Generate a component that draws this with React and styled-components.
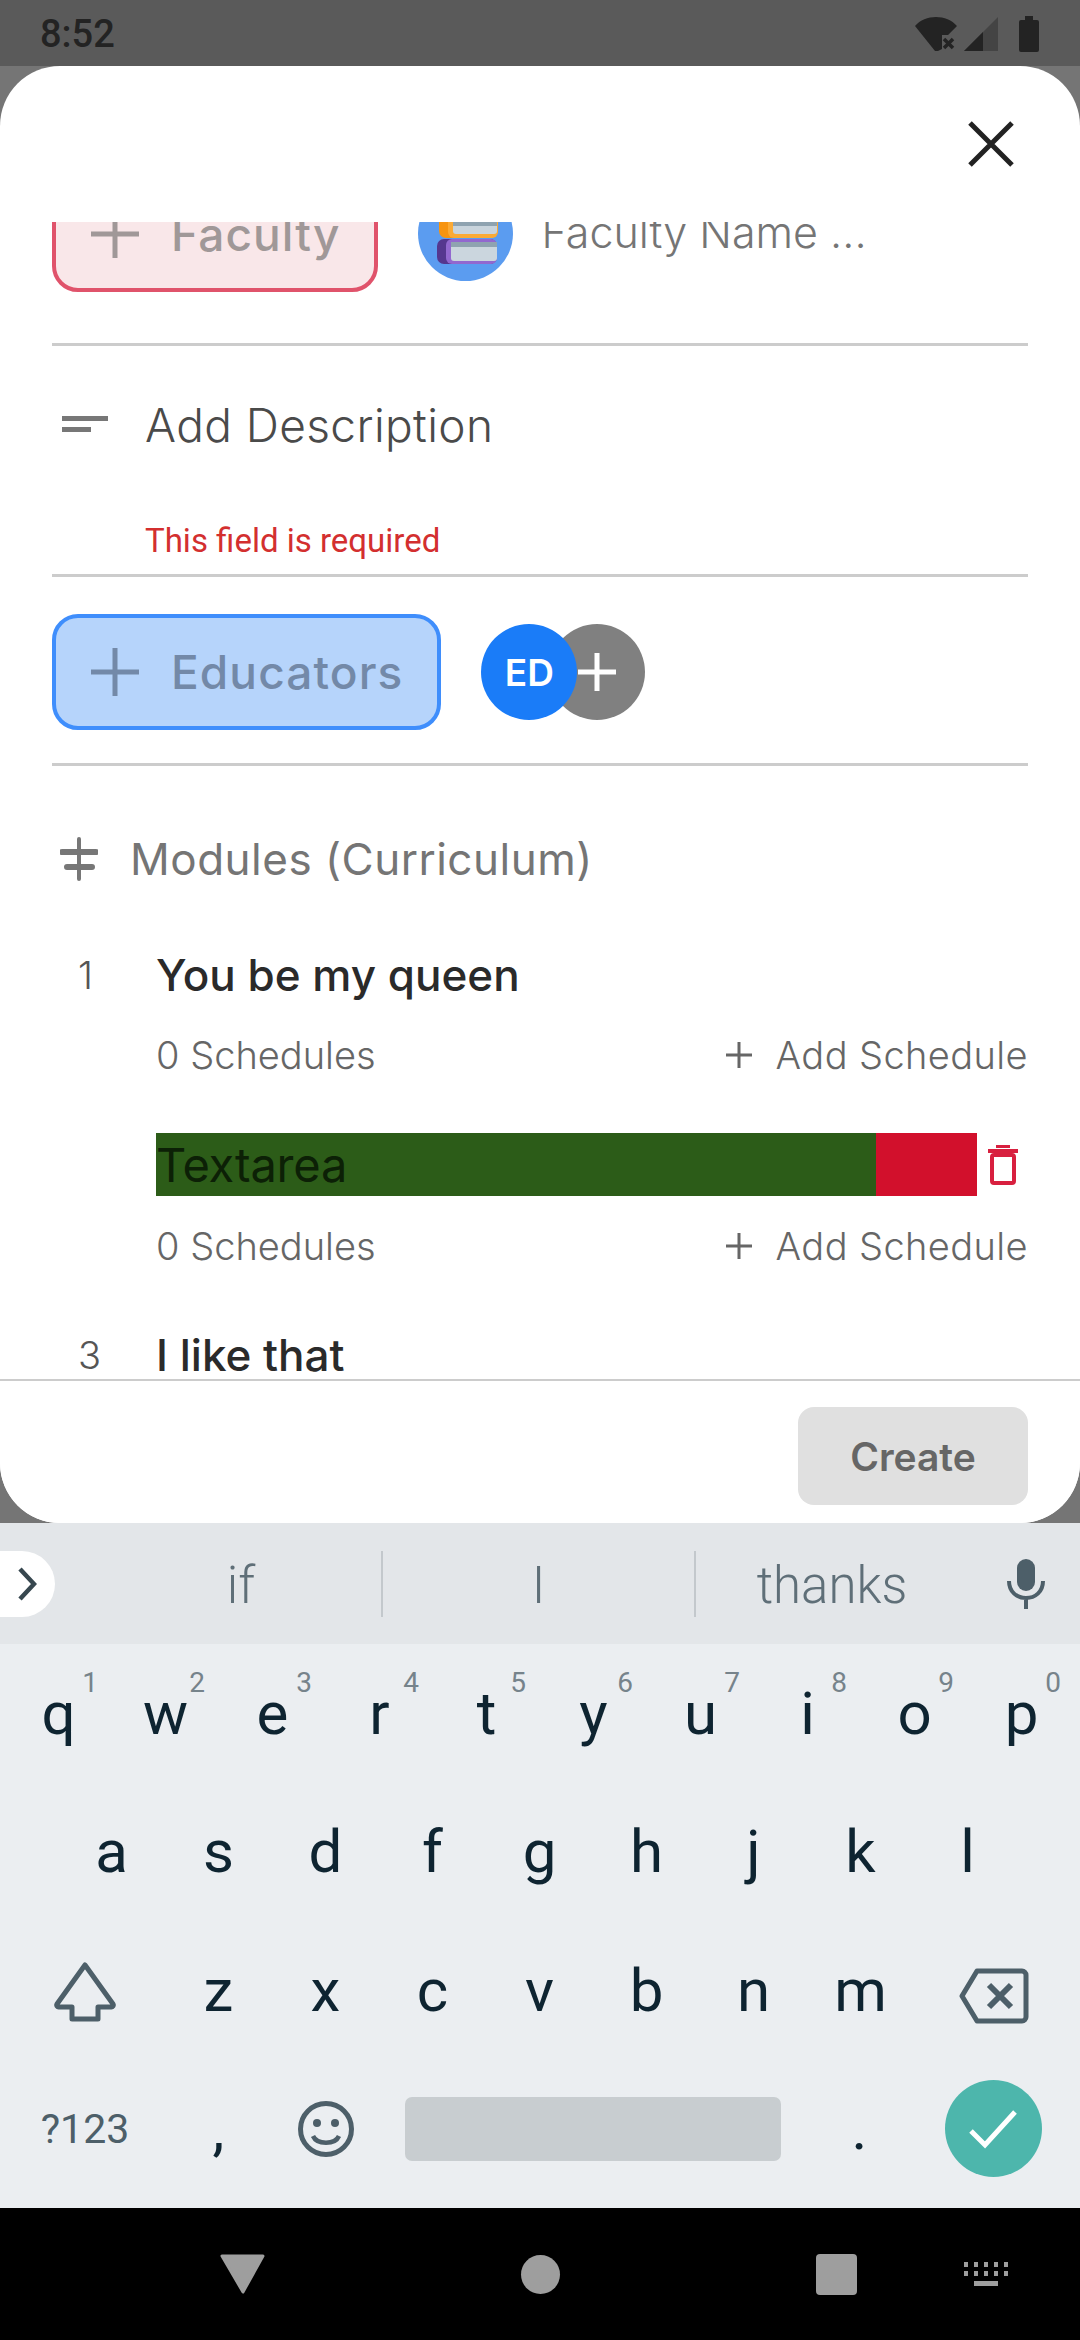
import styled, { createGlobalStyle } from 'styled-components'

const Global = createGlobalStyle`
  html, body { margin: 0; padding: 0; background: #757575; }
  * { box-sizing: border-box; }
`

const rows = ['qwertyuiop', 'asdfghjkl']
const hints = '1234567890'

function Plus({ size = 48, stroke = 5, color = 'currentColor' }) {
  return (
    <svg width={size} height={size} viewBox="0 0 48 48">
      <path d="M24 0V48M0 24H48" stroke={color} strokeWidth={(stroke * 48) / size} fill="none" />
    </svg>
  )
}

function Books() {
  return (
    <svg width="95" height="95" viewBox="0 0 95 95">
      <circle cx="47.5" cy="47.5" r="47.5" fill="#5b9cf0" />
      <rect x="21" y="30" width="58" height="22" rx="7" fill="#f79410" />
      <rect x="30" y="30" width="50" height="22" rx="6" fill="#fbaa35" />
      <rect x="35" y="35" width="44" height="13" rx="3" fill="#c9d4dc" />
      <rect x="35" y="35" width="44" height="5" fill="#8fa3b0" />
      <rect x="19" y="53" width="60" height="25" rx="7" fill="#55378f" />
      <rect x="28" y="53" width="51" height="25" rx="6" fill="#9268cf" />
      <rect x="33" y="56" width="46" height="19" rx="3" fill="#cbd6de" />
      <rect x="33" y="56" width="46" height="5" fill="#8fa3b0" />
    </svg>
  )
}

function Schedules() {
  return (
    <MetaRow>
      <span>0 Schedules</span>
      <AddSchedule>
        <Plus size={26} stroke={3} />
        <span>Add Schedule</span>
      </AddSchedule>
    </MetaRow>
  )
}

export default function App() {
  return (
    <Screen>
      <Global />
      <StatusBar>
        <Clock>8:52</Clock>
        <StatusIcons>
          <svg width="42" height="34" viewBox="0 0 42 34">
            <path d="M0 9C5 3 13 0 21 0s16 3 21 9L33 18H27V32L23 34H20Z" fill="#232323" />
            <path d="M29 22l9 9M38 22l-9 9" stroke="#232323" strokeWidth="3.5" />
          </svg>
          <svg width="34" height="34" viewBox="0 0 34 34">
            <path d="M34 0V34H0Z" fill="#444" />
            <path d="M19 15V34H0Z" fill="#232323" />
          </svg>
          <svg width="20" height="36" viewBox="0 0 20 36">
            <path d="M6 0H14V4H18a2 2 0 0 1 2 2V34a2 2 0 0 1-2 2H2a2 2 0 0 1-2-2V6a2 2 0 0 1 2-2H6Z" fill="#232323" />
          </svg>
        </StatusIcons>
      </StatusBar>

      <Sheet>
        <SheetHeader>
          <svg width="46" height="46" viewBox="0 0 46 46">
            <path d="M2 2L44 44M44 2L2 44" stroke="#222" strokeWidth="5" fill="none" />
          </svg>
        </SheetHeader>

        <Scroller>
          <ScrollBody>
            <FacultyRow>
              <PickButton $tone="red">
                <Plus size={48} stroke={5} />
                <span>Faculty</span>
              </PickButton>
              <BookBadge>
                <Books />
              </BookBadge>
              <FacultyName>Faculty Name ...</FacultyName>
            </FacultyRow>

            <DescriptionBlock>
              <DescriptionRow>
                <svg width="46" height="18" viewBox="0 0 46 18">
                  <rect x="0" y="0" width="46" height="5" fill="#777" />
                  <rect x="0" y="11" width="29" height="5" fill="#777" />
                </svg>
                <DescriptionText>Add Description</DescriptionText>
              </DescriptionRow>
              <ErrorText>This field is required</ErrorText>
            </DescriptionBlock>

            <EducatorRow>
              <PickButton $tone="blue">
                <Plus size={48} stroke={5} />
                <span>Educators</span>
              </PickButton>
              <AvatarStack>
                <MoreAvatar>
                  <Plus size={38} stroke={5} color="#fff" />
                </MoreAvatar>
                <Avatar>ED</Avatar>
              </AvatarStack>
            </EducatorRow>

            <ModulesHead>
              <svg width="38" height="44" viewBox="0 0 38 44">
                <path d="M2 15H36M7 30H32" stroke="#777" strokeWidth="6" strokeLinecap="round" />
                <path d="M19 2V12M19 18V27M19 33V42" stroke="#777" strokeWidth="4" strokeLinecap="round" />
              </svg>
              <span>Modules (Curriculum)</span>
            </ModulesHead>

            <Module $gap={56}>
              <ModuleNo>1</ModuleNo>
              <ModuleBody>
                <ModuleTitle>You be my queen</ModuleTitle>
                <Schedules />
              </ModuleBody>
            </Module>

            <Module $gap={48}>
              <ModuleNo />
              <ModuleBody>
                <EditRow>
                  <GreenField>Textarea</GreenField>
                  <RedField />
                  <TrashBtn>
                    <svg width="30" height="40" viewBox="0 0 30 40">
                      <path d="M0 6H30M10 3V1H20V3" stroke="#d8203f" strokeWidth="4" fill="none" />
                      <rect x="4" y="10" width="22" height="28" rx="2" stroke="#d8203f" strokeWidth="4" fill="none" />
                    </svg>
                  </TrashBtn>
                </EditRow>
                <Schedules />
              </ModuleBody>
            </Module>

            <Module $gap={49}>
              <ModuleNo>3</ModuleNo>
              <ModuleBody>
                <ModuleTitle>I like that</ModuleTitle>
              </ModuleBody>
            </Module>
          </ScrollBody>
        </Scroller>

        <SheetFooter>
          <CreateBtn>Create</CreateBtn>
        </SheetFooter>
      </Sheet>

      <Keyboard>
        <Suggestions>
          <ExpandPill>
            <svg width="20" height="34" viewBox="0 0 20 34">
              <path d="M3 2L17 17L3 32" stroke="#37474f" strokeWidth="4.5" fill="none" />
            </svg>
          </ExpandPill>
          <Suggestion $width={326} $pad={46}>if</Suggestion>
          <Suggestion $width={313} $line>I</Suggestion>
          <Suggestion $width={274} $line>thanks</Suggestion>
          <MicSlot>
            <svg width="38" height="50" viewBox="0 0 38 50">
              <rect x="10" y="0" width="18" height="32" rx="9" fill="#4d5f69" />
              <path d="M2 22C2 33 10 39 19 39s17-6 17-17M19 39V50" stroke="#4d5f69" strokeWidth="4" fill="none" />
            </svg>
          </MicSlot>
        </Suggestions>

        <Keys>
          <KeyRow $inset={5}>
            {rows[0].split('').map((k, i) => (
              <Key key={k}>
                {k}
                <Hint>{hints[i]}</Hint>
              </Key>
            ))}
          </KeyRow>
          <KeyRow $inset={58}>
            {rows[1].split('').map((k) => (
              <Key key={k}>{k}</Key>
            ))}
          </KeyRow>
          <KeyRow $inset={5}>
            <WideKey $lift={4}>
              <svg width="62" height="60" viewBox="0 0 62 60">
                <path d="M31 3L59 42a2 2 0 0 1-2 3H44V57H18V45H5a2 2 0 0 1-2-3Z" stroke="#4d5f69" strokeWidth="5" fill="none" strokeLinejoin="round" />
              </svg>
            </WideKey>
            {'zxcvbnm'.split('').map((k) => (
              <Key key={k}>{k}</Key>
            ))}
            <WideKey $lift={12}>
              <svg width="70" height="56" viewBox="0 0 70 56">
                <path d="M18 3H63a4 4 0 0 1 4 4V49a4 4 0 0 1-4 4H18L3 28Z" stroke="#4d5f69" strokeWidth="5" fill="none" strokeLinejoin="round" />
                <path d="M30 17L52 39M52 17L30 39" stroke="#4d5f69" strokeWidth="6" />
              </svg>
            </WideKey>
          </KeyRow>
          <KeyRow $inset={5}>
            <WideKey>
              <SymbolsLabel>?123</SymbolsLabel>
            </WideKey>
            <Key>,</Key>
            <Key>
              <svg width="56" height="56" viewBox="0 0 56 56">
                <circle cx="28" cy="28" r="25.5" stroke="#4d5f69" strokeWidth="5" fill="none" />
                <circle cx="19" cy="22" r="4" fill="#4d5f69" />
                <circle cx="37" cy="22" r="4" fill="#4d5f69" />
                <path d="M15 35C19 44 37 44 41 35" stroke="#4d5f69" strokeWidth="4.5" fill="none" />
              </svg>
            </Key>
            <SpaceKey>
              <SpaceBar />
            </SpaceKey>
            <Key>.</Key>
            <WideKey>
              <DoneCircle>
                <svg width="50" height="40" viewBox="0 0 50 40">
                  <path d="M3 22L17 36L47 3" stroke="#fff" strokeWidth="5" fill="none" />
                </svg>
              </DoneCircle>
            </WideKey>
          </KeyRow>
        </Keys>
      </Keyboard>

      <NavBar>
        <svg width="45" height="40" viewBox="0 0 45 40">
          <path d="M2 2H43L23 38Z" fill="#9e9e9e" stroke="#9e9e9e" strokeWidth="3" strokeLinejoin="round" />
        </svg>
        <NavDot />
        <NavSquare />
        <svg width="44" height="24" viewBox="0 0 44 24">
          <path d="M2 0v5M12 0v5M22 0v5M32 0v5M42 0v5M2 9v5M12 9v5M22 9v5M32 9v5M42 9v5" stroke="#9e9e9e" strokeWidth="4" />
          <rect x="10" y="19" width="24" height="5" fill="#9e9e9e" />
        </svg>
      </NavBar>
    </Screen>
  )
}

const Screen = styled.div`
  width: 1080px;
  height: 2340px;
  background: #757575;
  display: flex;
  flex-direction: column;
  overflow: hidden;
  font-family: Inter, 'Liberation Sans', sans-serif;
`

const StatusBar = styled.div`
  height: 66px;
  background: #5a5a5a;
  display: flex;
  align-items: center;
  justify-content: space-between;
  padding: 1px 41px 0 40px;
`

const Clock = styled.span`
  font: 500 38px Roboto, sans-serif;
  color: #232323;
`

const StatusIcons = styled.div`
  display: flex;
  align-items: center;
  gap: 7px;

  svg:last-child {
    margin-left: 14px;
  }
`

const Sheet = styled.div`
  height: 1457px;
  background: #fff;
  border-radius: 60px;
  display: flex;
  flex-direction: column;
  overflow: hidden;
`

const SheetHeader = styled.div`
  height: 156px;
  flex: none;
  display: flex;
  align-items: center;
  justify-content: flex-end;
  padding-right: 66px;
`

const Scroller = styled.div`
  flex: 1;
  min-height: 0;
  overflow: hidden;
`

const ScrollBody = styled.div`
  margin-top: -46px;
  padding: 0 52px;
`

const FacultyRow = styled.div`
  height: 170px;
  display: flex;
  align-items: flex-start;
  border-bottom: 3px solid #ccc;
`

const PickButton = styled.div`
  height: 116px;
  display: flex;
  align-items: center;
  gap: 32px;
  padding: 0 34px 0 35px;
  border-radius: 26px;
  font-weight: 500;
  font-size: 46px;
  letter-spacing: 1.1px;
  border: 4px solid ${(p) => (p.$tone === 'red' ? '#e0536b' : '#3f8efc')};
  background: ${(p) => (p.$tone === 'red' ? '#f9e7e9' : '#b6d4fb')};
  color: ${(p) => (p.$tone === 'red' ? '#a09898' : '#7389a8')};
`

const BookBadge = styled.div`
  margin: 10px 0 0 40px;
  height: 95px;
  display: flex;
`

const FacultyName = styled.div`
  margin: 30px 0 0 28px;
  font-size: 43px;
  font-weight: 300;
  color: #757575;
`

const DescriptionBlock = styled.div`
  height: 231px;
  border-bottom: 3px solid #ccc;
`

const DescriptionRow = styled.div`
  height: 158px;
  display: flex;
  align-items: center;
  padding-left: 10px;
  gap: 37px;
`

const DescriptionText = styled.span`
  font-size: 46px;
  letter-spacing: 0.4px;
  font-weight: 300;
  color: #4a4a4a;
`

const ErrorText = styled.div`
  margin: 17px 0 0 93px;
  font: 400 33px/40px Roboto, sans-serif;
  color: #d32f2f;
`

const EducatorRow = styled.div`
  height: 189px;
  padding-top: 37px;
  display: flex;
  align-items: flex-start;
  border-bottom: 3px solid #ccc;
`

const AvatarStack = styled.div`
  margin: 10px 0 0 40px;
  display: flex;
  flex-direction: row-reverse;
`

const Avatar = styled.div`
  width: 96px;
  height: 96px;
  border-radius: 50%;
  background: #1a7cf8;
  color: #fff;
  font-size: 37px;
  font-weight: 600;
  display: flex;
  align-items: center;
  justify-content: center;
  position: relative;
`

const MoreAvatar = styled.div`
  width: 96px;
  height: 96px;
  margin-left: -28px;
  border-radius: 50%;
  background: #808080;
  display: flex;
  align-items: center;
  justify-content: center;
`

const ModulesHead = styled.div`
  margin-top: 63px;
  height: 60px;
  padding-left: 8px;
  display: flex;
  align-items: center;
  gap: 32px;
  font-size: 44px;
  font-weight: 400;
  letter-spacing: 0.5px;
  color: #757575;
`

const Module = styled.div`
  margin-top: ${(p) => p.$gap}px;
  display: flex;
`

const ModuleNo = styled.div`
  width: 104px;
  padding-left: 26px;
  flex: none;
  font-size: 38px;
  font-weight: 300;
  line-height: 60px;
  color: #555;
`

const ModuleBody = styled.div`
  flex: 1;
  min-width: 0;
`

const ModuleTitle = styled.div`
  font-size: 44px;
  font-weight: 500;
  line-height: 60px;
  color: #2a2a2a;
`

const MetaRow = styled.div`
  margin-top: 20px;
  height: 60px;
  display: flex;
  align-items: center;
  justify-content: space-between;
  font-size: 38px;
  font-weight: 300;
  color: #666;
`

const AddSchedule = styled.div`
  display: flex;
  align-items: center;
  gap: 24px;
  letter-spacing: 0.4px;
`

const EditRow = styled.div`
  height: 63px;
  display: flex;
`

const GreenField = styled.div`
  width: 720px;
  background: #2c5c18;
  font-size: 47px;
  font-weight: 400;
  letter-spacing: -0.2px;
  line-height: 63px;
  color: #0c2006;
`

const RedField = styled.div`
  width: 101px;
  background: #d2102c;
`

const TrashBtn = styled.div`
  flex: 1;
  display: flex;
  align-items: center;
  justify-content: center;
`

const SheetFooter = styled.div`
  height: 144px;
  flex: none;
  border-top: 2px solid #ccc;
  display: flex;
  justify-content: flex-end;
  padding: 26px 52px 0 0;
  background: #fff;
`

const CreateBtn = styled.div`
  width: 230px;
  height: 98px;
  border-radius: 16px;
  background: #e0e0e0;
  color: #666;
  font-size: 39px;
  font-weight: 600;
  display: flex;
  align-items: center;
  justify-content: center;
`

const Keyboard = styled.div`
  height: 685px;
  background: #ebeef1;
  font-family: Roboto, sans-serif;
`

const Suggestions = styled.div`
  height: 121px;
  background: #e3e6e9;
  display: flex;
  align-items: center;
`

const ExpandPill = styled.div`
  width: 55px;
  height: 66px;
  flex: none;
  background: #fff;
  border-radius: 0 33px 33px 0;
  display: flex;
  align-items: center;
  padding-left: 17px;
`

const Suggestion = styled.div`
  width: ${(p) => p.$width}px;
  height: 66px;
  flex: none;
  padding-left: ${(p) => p.$pad || 0}px;
  border-left: ${(p) => (p.$line ? '2px solid #c3c8cc' : 'none')};
  font-size: 51px;
  font-weight: 300;
  color: #5f6f78;
  display: flex;
  align-items: center;
  justify-content: center;
  padding-top: 4px;
`

const MicSlot = styled.div`
  flex: 1;
  display: flex;
  justify-content: center;
  padding-left: 4px;
`

const Keys = styled.div`
  height: 564px;
  display: flex;
  flex-direction: column;
`

const KeyRow = styled.div`
  height: 138.5px;
  display: flex;
  padding-left: ${(p) => p.$inset}px;
`

const Key = styled.div`
  width: 107px;
  flex: none;
  position: relative;
  display: flex;
  align-items: center;
  justify-content: center;
  font-size: 60px;
  color: #0e2431;
`

const Hint = styled.span`
  position: absolute;
  top: 22px;
  right: 14px;
  font-size: 28px;
  color: #76838b;
`

const WideKey = styled(Key)`
  width: 160px;
  padding-top: ${(p) => p.$lift || 0}px;
`

const SpaceKey = styled.div`
  width: 427px;
  display: flex;
  align-items: center;
  justify-content: center;
`

const SpaceBar = styled.div`
  width: 376px;
  height: 64px;
  border-radius: 7px;
  background: #c8cdd0;
`

const SymbolsLabel = styled.span`
  font-size: 41px;
  color: #4d5f69;
`

const DoneCircle = styled.div`
  width: 97px;
  height: 97px;
  border-radius: 50%;
  background: #4db6ac;
  display: flex;
  align-items: center;
  justify-content: center;
`

const NavBar = styled.div`
  height: 132px;
  background: #000;
  display: flex;
  align-items: center;
  padding-left: 220px;
  gap: 256px;

  svg:last-child {
    margin-left: -149px;
  }
`

const NavDot = styled.div`
  width: 39px;
  height: 39px;
  border-radius: 50%;
  background: #9e9e9e;
`

const NavSquare = styled.div`
  width: 41px;
  height: 41px;
  border-radius: 4px;
  background: #9e9e9e;
`
